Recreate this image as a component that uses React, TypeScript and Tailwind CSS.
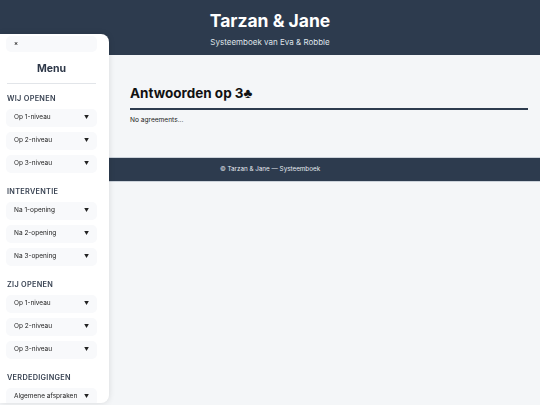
import React from "react";

const sections: { title: string; items: string[] }[] = [
  { title: "WIJ OPENEN", items: ["Op 1-niveau", "Op 2-niveau", "Op 3-niveau"] },
  { title: "INTERVENTIE", items: ["Na 1-opening", "Na 2-opening", "Na 3-opening"] },
  { title: "ZIJ OPENEN", items: ["Op 1-niveau", "Op 2-niveau", "Op 3-niveau"] },
  { title: "VERDEDIGINGEN", items: ["Algemene afspraken"] },
];

export default function App() {
  return (
    <div className="min-h-[405px] bg-[#f4f6f8] text-[#1a1a1a]" style={{ fontFamily: "Inter, 'Liberation Sans', sans-serif" }}>
      <header className="h-[55px] bg-[#2d3b4e] text-white flex flex-col items-center pt-[9px]">
        <h1 className="text-[17.5px] font-bold leading-[24px]">Tarzan &amp; Jane</h1>
        <p className="text-[8px] leading-[12px] mt-[3px] text-[#dfe4ea]">Systeemboek van Eva &amp; Robble</p>
      </header>
      <main className="pl-[130px] pr-[12px] pt-[28px] pb-[32px]">
        <h2 className="text-[13.5px] font-bold leading-[20px] pb-[5px] border-b-2 border-[#2d3b4e] text-[#111]">
          Antwoorden op 3♣
        </h2>
        <p className="text-[6.6px] leading-[10px] mt-[5px] text-[#222]">No agreements...</p>
      </main>
      <footer className="h-[25px] bg-[#2d3b4e] border-y border-[#cbd2da] flex items-center justify-center text-[6.3px] text-[#e5e9ee]">
        © Tarzan &amp; Jane — Systeemboek
      </footer>

      <aside className="fixed left-0 top-[34px] w-[109px] h-[369px] bg-white rounded-r-[8px] shadow-[0_0_6px_rgba(0,0,0,0.12)] pl-[6px] pr-[12px] pt-[2px] overflow-hidden">
        <button className="block w-full h-[16px] rounded-[5px] bg-[#f8f9fb] text-[6px] font-bold text-[#333] text-left pl-[8px] leading-[16px]">×</button>
        <div className="text-center font-bold text-[10.5px] text-[#2d3748] mt-[10px] leading-[14px]">Menu</div>
        <div className="border-b border-[#e2e5e9] mt-[7px] mx-[1px]" />
        <nav className="mt-[10px]">
          {sections.map((s, i) => (
            <div key={i} className={i > 0 ? "mt-[14px]" : ""}>
              <div className="text-[7.3px] font-semibold tracking-[0.3px] text-[#374151] leading-[10px] pl-[1px]">{s.title}</div>
              <div className="mt-[5px] flex flex-col gap-[5px]">
                {s.items.map((it, j) => (
                  <div key={j} className="h-[18px] rounded-[5px] bg-[#f8f9fb] flex items-center justify-between pl-[8px] pr-[8px] text-[6.5px] text-[#222]">
                    <span>{it}</span>
                    <span className="text-[5px]">▼</span>
                  </div>
                ))}
              </div>
            </div>
          ))}
        </nav>
      </aside>
    </div>
  );
}
